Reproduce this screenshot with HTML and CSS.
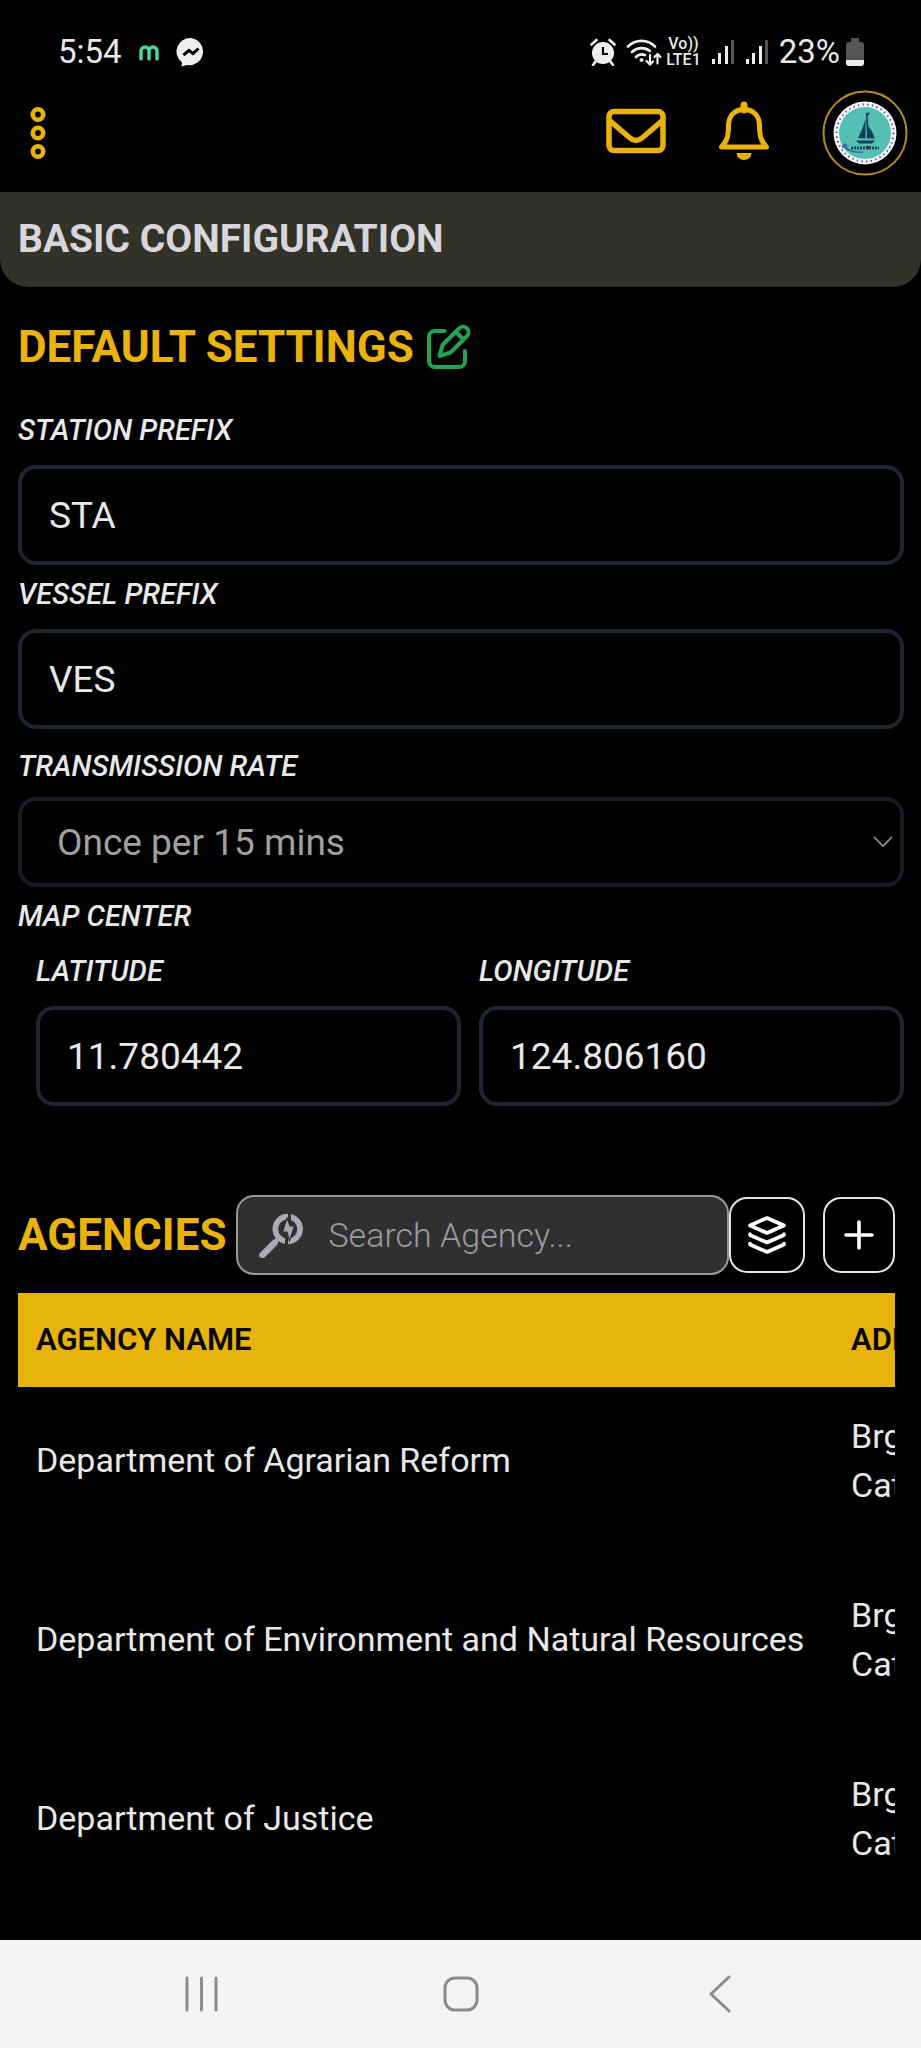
FILE: index.html
```html
<!DOCTYPE html>
<html lang="en">
<head>
<meta charset="utf-8">
<meta name="viewport" content="width=device-width, initial-scale=1">
<title>Basic Configuration</title>
<link rel="stylesheet" href="styles.css">
</head>
<body>
<div class="status-bar">
  <div class="status-group">
    <span class="clock">5:54</span>
    <svg width="22" height="18" viewBox="0 0 22 18" fill="none" stroke="#45dc9c" stroke-width="3.4" stroke-linecap="round" aria-hidden="true"><path d="M3 16V8a4 4 0 0 1 8 0v8M11 8a4 4 0 0 1 8 0v8"/></svg>
    <svg width="30" height="30" viewBox="0 0 30 30" aria-hidden="true"><path fill="#eee" d="M15 1a14 13.6 0 1 1-4 27L5.500 29.500 6 25.500A13.600 13.600 0 0 1 15 1z"/><path d="M7.500 18l5.500-4.500 4 3 5.500-5" fill="none" stroke="#000" stroke-width="3"/></svg>
  </div>
  <div class="status-group status-right">
    <div class="status-group network">
      <svg class="alarm" width="26" height="28" viewBox="0 0 26 28" aria-hidden="true"><circle cx="13" cy="15" r="11" fill="#eee"/><path d="M1.500 6.500l5-4.500M24.500 6.500l-5-4.500M6 23l-3 4M20 23l3 4" stroke="#eee" stroke-width="2.600" stroke-linecap="round"/><path d="M13 9v7h5" fill="none" stroke="#000" stroke-width="2.200"/></svg>
      <svg width="36" height="28" viewBox="0 0 36 28" fill="none" stroke="#eee" stroke-width="2.700" stroke-linecap="round" aria-hidden="true"><path d="M2 8.500a19 19 0 0 1 27 0M6 14a13.500 13.500 0 0 1 18-1M10 19a8 8 0 0 1 9-2"/><circle cx="15.500" cy="22" r="1.500" fill="#eee" stroke-width="1"/><path stroke-width="2.200" d="M24 17v9.500m-3.500-3.500l3.500 3.500 3-3M31.500 25.500V16m-3 3l3-3 3 3"/></svg>
      <span class="volte"><span class="volte-line">Vo))</span><span class="volte-line">LTE1</span></span>
    </div>
    <svg width="24" height="26" viewBox="0 0 24 26" aria-hidden="true"><path fill="#eee" d="M1 20h3v5H1zM7 14h3v11H7zM14 7h3v18h-3z"/><path fill="#555" d="M20 1h3v24h-3z"/></svg>
    <svg width="24" height="26" viewBox="0 0 24 26" aria-hidden="true"><path fill="#eee" d="M1 20h3v5H1zM7 14h3v11H7zM14 7h3v18h-3z"/><path fill="#555" d="M20 1h3v24h-3z"/></svg>
    <div class="status-group battery">
      <span class="battery-text">23%</span>
      <svg width="18" height="28" viewBox="0 0 18 28" aria-hidden="true"><path fill="#555" d="M5 0h8v4h2a3 3 0 0 1 3 3v15H0V7a3 3 0 0 1 3-3h2z"/><path fill="#eee" d="M0 22h18v3a3 3 0 0 1-3 3H3a3 3 0 0 1-3-3z"/></svg>
    </div>
  </div>
</div>

<header class="app-header">
  <button class="icon-button" type="button" aria-label="Menu">
    <svg width="16" height="54" viewBox="0 0 16 54" fill="none" stroke="#eab30b" stroke-width="4.600" aria-hidden="true"><circle cx="8" cy="8.500" r="5.200"/><circle cx="8" cy="27" r="5.200"/><circle cx="8" cy="45.500" r="5.200"/></svg>
  </button>
  <div class="header-actions">
    <button class="icon-button" type="button" aria-label="Messages">
      <svg width="60" height="50" viewBox="0 0 60 50" fill="none" stroke="#eab30b" stroke-width="5.500" stroke-linejoin="round" aria-hidden="true"><rect x="3" y="3.500" width="54" height="39" rx="5"/><path d="M3 12l21 18q6 5 12 0l21-18"/></svg>
    </button>
    <button class="icon-button" type="button" aria-label="Notifications">
      <svg width="52" height="66" viewBox="0 0 52 66" aria-hidden="true"><path d="M26 9.500c-10 0-15.500 7-15.500 16 0 11-1.500 15.500-7 21.500h45c-5.500-6-7-10.500-7-21.500 0-9-5.500-16-15.500-16z" fill="none" stroke="#eab30b" stroke-width="5" stroke-linejoin="round"/><path d="M26 5v5" stroke="#eab30b" stroke-width="7" stroke-linecap="round"/><path d="M18.500 53h15a7.500 7 0 0 1-15 0z" fill="#eab30b"/></svg>
    </button>
    <button class="icon-button" type="button" aria-label="Profile">
      <svg width="86" height="86" viewBox="0 0 86 86" aria-hidden="true"><circle cx="43" cy="43" r="41.500" fill="#000" stroke="#b48d1e" stroke-width="2"/><circle cx="43" cy="43" r="31.500" fill="#f4f2fb"/><circle cx="43" cy="43" r="28.500" fill="none" stroke="#445577" stroke-width="2" stroke-dasharray="1.300 3.400"/><circle cx="43" cy="43" r="26" fill="#55bfb3"/><path fill="#0e4058" d="M44 23l4-.5-2.500 4 1 10c3 4 5 7 6 12H45zM43.500 29v19.500l-7.500-.5c3-6 5.500-12 7.500-19zM34 50.500h19l-3 3H37z"/><path d="M21 55c4 6 10 8 20 7M21 58c-1-4 3-5 4-1" fill="none" stroke="#2d6f9c" stroke-width="1.600"/><path d="M29 58h28" stroke="#174a60" stroke-width="3" stroke-dasharray="2 1"/><path d="M43 56l3 4 3-4z" fill="#5c2945"/></svg>
    </button>
  </div>
</header>

<main>
  <h1 class="page-title">BASIC CONFIGURATION</h1>

  <form class="settings">
    <div class="section-heading">
      <h2 class="section-title">DEFAULT SETTINGS</h2>
      <button class="icon-button" type="button" aria-label="Edit default settings">
        <svg width="46" height="46" viewBox="0 0 46 46" fill="none" stroke="#20a354" stroke-width="4" stroke-linecap="round" stroke-linejoin="round" aria-hidden="true"><path d="M18.500 7H9a6 6 0 0 0-6 6v24a6 6 0 0 0 6 6h24a6 6 0 0 0 6-6V27"/><path d="M13.500 32l3-11L33 4.500a5.300 5.300 0 0 1 8 7.500L24.500 28.500zM30 8l7.500 7.500"/></svg>
      </button>
    </div>
    <div class="field">
      <label class="label" for="station">STATION PREFIX</label>
      <input class="text-box" id="station" type="text" value="STA">
    </div>
    <div class="field">
      <label class="label" for="vessel">VESSEL PREFIX</label>
      <input class="text-box" id="vessel" type="text" value="VES">
    </div>
    <div class="field rate-field">
      <label class="label" for="rate">TRANSMISSION RATE</label>
      <div class="select-wrap">
        <select class="rate-select" id="rate" disabled><option>Once per 15 mins</option></select>
        <svg class="chevron" width="20" height="12" viewBox="0 0 20 12" fill="none" stroke="#999" stroke-width="1.600" aria-hidden="true"><path d="M1 1l9 9 9-9"/></svg>
      </div>
    </div>
    <fieldset class="map-center">
      <legend class="label">MAP CENTER</legend>
      <div class="coordinates">
        <div class="field">
          <label class="label" for="lat">LATITUDE</label>
          <input class="text-box" id="lat" type="text" value="11.780442">
        </div>
        <div class="field">
          <label class="label" for="lng">LONGITUDE</label>
          <input class="text-box" id="lng" type="text" value="124.806160">
        </div>
      </div>
    </fieldset>
  </form>

  <section class="agencies">
    <div class="toolbar">
      <h2 class="section-title">AGENCIES</h2>
      <label class="search">
        <svg width="46" height="46" viewBox="0 0 46 46" fill="none" aria-hidden="true"><circle cx="29.700" cy="17" r="12.400" stroke="#a9abb7" stroke-width="5.600"/><path d="M21 26l-5 5" stroke="#a9abb7" stroke-width="4"/><path d="M16.500 31L4.500 43" stroke="#a9abb7" stroke-width="6.600" stroke-linecap="round"/><path d="M31.500 0v8M28.500 26v8" stroke="#303030" stroke-width="3"/><path d="M29 6l3 8 4.500 0-5 15-2.500-9-4.500 0z" fill="#a9abb7" stroke="#303030" stroke-width="1.200"/></svg>
        <input class="search-box" type="search" placeholder="Search Agency..." aria-label="Search Agency">
      </label>
      <button class="tool-button" type="button" aria-label="Layers">
        <svg width="38" height="38" viewBox="0 0 38 38" fill="none" stroke="#fff" stroke-width="3.600" stroke-linecap="round" stroke-linejoin="round" aria-hidden="true"><path d="M19 2l17 7.500L19 17 2 9.500z"/><path d="M2 18v1l17 7.500L36 19v-1M2 27.500v1L19 36l17-7.500v-1"/></svg>
      </button>
      <button class="tool-button add-button" type="button" aria-label="Add agency">
        <svg width="30" height="30" viewBox="0 0 30 30" stroke="#fff" stroke-width="3.600" stroke-linecap="round" aria-hidden="true"><path d="M15 2v26M2 15h26"/></svg>
      </button>
    </div>
    <div class="table-scroll">
      <table class="agency-table">
        <thead><tr><th>AGENCY NAME</th><th>ADDRESS</th></tr></thead>
        <tbody>
          <tr><td>Department of Agrarian Reform</td><td>Brgy.<br>Catbalogan</td></tr>
          <tr><td>Department of Environment and Natural Resources</td><td>Brgy.<br>Catbalogan</td></tr>
          <tr><td>Department of Justice</td><td>Brgy.<br>Catbalogan</td></tr>
        </tbody>
      </table>
    </div>
  </section>
</main>

<nav class="system-nav" aria-label="System">
  <button class="icon-button" type="button" aria-label="Recent apps"><svg width="34" height="36" viewBox="0 0 34 36" stroke="#8c8c8c" stroke-width="3" stroke-linecap="round" aria-hidden="true"><path d="M2 2v32M16.500 2v32M31 2v32"/></svg></button>
  <button class="icon-button" type="button" aria-label="Home"><svg width="36" height="36" viewBox="0 0 36 36" fill="none" stroke="#8c8c8c" stroke-width="3" aria-hidden="true"><rect x="2" y="2" width="32" height="32" rx="10"/></svg></button>
  <button class="icon-button" type="button" aria-label="Back"><svg width="22" height="38" viewBox="0 0 22 38" fill="none" stroke="#8c8c8c" stroke-width="3" stroke-linecap="round" stroke-linejoin="round" aria-hidden="true"><path d="M20 2L2 19l18 17"/></svg></button>
</nav>
</body>
</html>
```

FILE: styles.css
```css
* { box-sizing: border-box; }
body {
  margin: 0;
  min-height: 100vh;
  display: flex;
  flex-direction: column;
  background: #000;
  color: #e8e8e8;
  font-family: Roboto, sans-serif;
}
svg { display: block; flex: none; }
h1, h2 { margin: 0; font-weight: 700; }

.status-bar {
  display: flex;
  justify-content: space-between;
  align-items: center;
  height: 84px;
  padding: 20px 57px 0 58px;
}
.status-group { display: flex; align-items: center; gap: 16px; }
.status-right { gap: 10px; }
.network { gap: 4px; }
.alarm { margin-right: 6px; }
.battery { gap: 6px; }
.clock, .battery-text { font-size: 33px; line-height: 40px; }
.volte { font-size: 16px; line-height: 16px; font-weight: 500; text-align: center; }
.volte-line { display: block; }

.app-header {
  display: flex;
  justify-content: space-between;
  align-items: center;
  height: 108px;
  padding: 0 13px 10px 30px;
}
.header-actions { display: flex; align-items: center; gap: 52px; }
.icon-button { display: block; margin: 0; padding: 0; border: 0; background: none; }

main { flex: 1; }
.page-title {
  padding: 24px 18px;
  border-radius: 0 0 28px 28px;
  background: #323228;
  color: #d8d5dc;
  font-size: 39px;
  line-height: 47px;
}
.settings { padding: 30px 17px 0 18px; }
.section-heading { display: flex; align-items: center; gap: 12px; margin-bottom: 36px; }
.section-title { color: #eab30b; font-size: 44px; line-height: 60px; }
.field { display: flex; flex-direction: column; gap: 18px; margin-bottom: 12px; }
.label { padding: 0; font-size: 29px; line-height: 34px; font-style: italic; font-weight: 500; }
.text-box, .rate-select {
  width: 100%;
  height: 100px;
  padding: 0 27px;
  border: 4px solid #1f2530;
  border-radius: 18px;
  background: #000;
  color: #e8e8e8;
  font: 400 37px Roboto, sans-serif;
}
.rate-field { gap: 14px; padding-top: 8px; }
.select-wrap { position: relative; }
.rate-select { display: block; height: 90px; padding: 0 35px; border-color: #191a23; color: #a0a0a0; opacity: 1; appearance: none; }
.chevron { position: absolute; right: 11px; top: 39px; }
.map-center { min-width: 0; margin: 0; padding: 0; border: 0; }
.coordinates { display: grid; grid-template-columns: 1fr 1fr; gap: 18px; padding: 21px 0 0 18px; }

.agencies { padding: 77px 26px 0 18px; }
.toolbar { display: flex; align-items: center; margin-bottom: 18px; }
.toolbar .section-title { margin-right: 10px; }
.search {
  flex: 1;
  min-width: 0;
  display: flex;
  align-items: center;
  gap: 24px;
  height: 80px;
  padding: 0 20px;
  border: 2px solid #98989a;
  border-radius: 18px;
  background: #303030;
}
.search-box { flex: 1; min-width: 0; padding: 0; border: 0; background: none; color: #e8e8e8; font: 300 34px Roboto, sans-serif; }
.search-box::placeholder { color: #9b9ba1; }
.tool-button {
  display: flex;
  align-items: center;
  justify-content: center;
  width: 76px;
  height: 76px;
  padding: 0;
  border: 2px solid #e4e4e4;
  border-radius: 18px;
  background: #000;
}
.add-button { width: 72px; margin-left: 18px; }
.table-scroll { overflow-x: auto; scrollbar-width: none; }
.agency-table { border-collapse: collapse; white-space: nowrap; }
.agency-table th { height: 94px; padding: 0 18px; background: #e7b209; color: #080400; font-size: 31px; line-height: 36px; font-weight: 600; text-align: left; }
.agency-table th:first-child { min-width: 815px; }
.agency-table td { height: 179px; padding: 0 18px 32px; font-size: 34px; line-height: 49px; }

.system-nav {
  display: grid;
  grid-template-columns: repeat(3, 1fr);
  justify-items: center;
  align-items: center;
  height: 108px;
  padding: 0 72px;
  background: #f4f4f4;
}
```
